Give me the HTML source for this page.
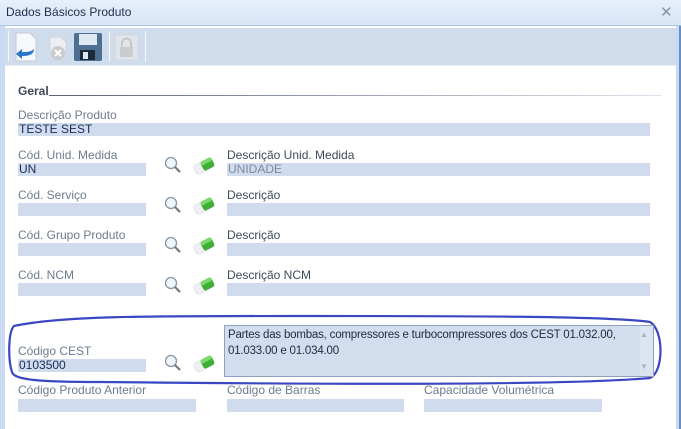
<!DOCTYPE html>
<html><head><meta charset="utf-8"><style>
*{margin:0;padding:0;box-sizing:border-box}
body{width:681px;height:429px;overflow:hidden;background:#fff;font-family:"Liberation Sans",sans-serif;font-size:12px;position:relative}
.a{position:absolute}
.lbl{position:absolute;color:#6e7b8f;font-size:12px;line-height:14px}
.dl{position:absolute;color:#3f4a5a;font-size:12px;line-height:14px}
.f{position:absolute;background:#d0dcee;height:13px;color:#1a2b55;font-size:12px;line-height:13px;padding-left:1px}
.fd{color:#7d8aa0}
</style></head><body>
<div class="a" style="left:0;top:0;width:681px;height:26px;background:linear-gradient(#e6eefa,#d8e6f7);border-bottom:1px solid #a9c1e2"></div>
<div class="a" style="left:6px;top:5px;color:#1e2f4e;font-size:12px">Dados Básicos Produto</div>
<div class="a" style="left:660px;top:3px;color:#8a96a8;font-size:15px">✕</div>
<div class="a" style="left:0;top:26px;width:5px;height:403px;background:#c9daf2"></div>
<div class="a" style="left:676px;top:26px;width:5px;height:403px;background:#c9daf2;border-right:2px solid #6a8dc4"></div>
<div class="a" style="left:5px;top:28px;width:671px;height:38px;background:#cfdcec;border-bottom:1px solid #e8eef6"></div>
<div class="a" style="left:8px;top:31px;width:1px;height:31px;background:#f4f7fb"></div>
<div class="a" style="left:109px;top:31px;width:1px;height:31px;background:#f4f7fb"></div>
<div class="a" style="left:145px;top:31px;width:1px;height:31px;background:#f4f7fb"></div>
<svg class="a" style="left:14px;top:32px" width="24" height="30"><path d="M2 1h14l6 6v22H2z" fill="#f6f8fb" stroke="#c7ccd4"/><path d="M20 17c0 6-6 7-12 7v3l-6-5 6-5v3c5 0 9 0 12-3z" fill="#2a75c9"/></svg>
<svg class="a" style="left:47px;top:36px" width="22" height="26"><path d="M3 1h11l5 5v10H3z" fill="#eceef2" stroke="#d0d4da"/><circle cx="11" cy="17" r="7" fill="#c9cbcf"/><path d="M8 14l6 6M14 14l-6 6" stroke="#fff" stroke-width="2"/></svg>
<svg class="a" style="left:73px;top:32px" width="30" height="30"><rect x="1" y="1" width="28" height="28" rx="2" fill="#4d6f92"/><rect x="6" y="2" width="18" height="11" fill="#dfe8f2"/><rect x="7" y="18" width="15" height="10" fill="#1c2a3b"/><rect x="10" y="20" width="5" height="7" fill="#dfe8f2"/></svg>
<svg class="a" style="left:114px;top:34px" width="26" height="28"><rect x="1" y="1" width="23" height="25" fill="#e1e4e9" stroke="#d3d7dd"/><rect x="6" y="13" width="13" height="10" fill="#c9ccd1"/><path d="M8 13v-4a4.5 4.5 0 0 1 9 0v4" fill="none" stroke="#c4c7cc" stroke-width="2"/></svg>
<div class="a" style="left:18px;top:84px;font-weight:bold;color:#404a57;font-size:12px">Geral</div>
<div class="a" style="left:49px;top:95px;width:612px;height:1px;background:linear-gradient(90deg,#5a6476,#dde3ec)"></div>
<div class="lbl" style="left:18px;top:108px">Descrição Produto</div>
<div class="f" style="left:18px;top:123px;width:632px">TESTE SEST</div>

<div class="lbl" style="left:18px;top:148px">Cód. Unid. Medida</div>
<div class="f" style="left:18px;top:163px;width:128px">UN</div>
<div class="dl" style="left:227px;top:148px">Descrição Unid. Medida</div>
<div class="f fd" style="left:227px;top:163px;width:423px">UNIDADE</div>

<div class="lbl" style="left:18px;top:188px">Cód. Serviço</div>
<div class="f" style="left:18px;top:203px;width:128px"></div>
<div class="dl" style="left:227px;top:188px">Descrição</div>
<div class="f" style="left:227px;top:203px;width:423px"></div>

<div class="lbl" style="left:18px;top:228px">Cód. Grupo Produto</div>
<div class="f" style="left:18px;top:243px;width:128px"></div>
<div class="dl" style="left:227px;top:228px">Descrição</div>
<div class="f" style="left:227px;top:243px;width:423px"></div>

<div class="lbl" style="left:18px;top:268px">Cód. NCM</div>
<div class="f" style="left:18px;top:283px;width:128px"></div>
<div class="dl" style="left:227px;top:268px">Descrição NCM</div>
<div class="f" style="left:227px;top:283px;width:423px"></div>

<svg class="a" style="left:0;top:310px" width="681" height="80"><path d="M14 16C60 6 140 6 300 6S610 6 650 12C664 20 664 62 650 68C560 76 300 74 100 72C40 72 14 70 12 62C8 50 8 22 14 16z" fill="none" stroke="#3a47c2" stroke-width="2.2"/></svg>
<div class="lbl" style="left:18px;top:344px">Código CEST</div>
<div class="f" style="left:18px;top:359px;width:128px">0103500</div>
<div class="a" style="left:224px;top:325px;width:430px;height:52px;background:#d2ddee;border:1px solid #8f9fbd"></div>
<div class="a" style="left:640px;top:326px;width:13px;height:50px;background:#dbe4f1"></div>
<div class="a" style="left:640px;top:330px;color:#a9b3c1;font-size:8px">▲</div>
<div class="a" style="left:640px;top:362px;color:#a9b3c1;font-size:8px">▼</div>
<div class="a" style="left:228px;top:327px;width:412px;color:#1e2a44;font-size:11.5px;letter-spacing:-0.2px;line-height:16px">Partes das bombas, compressores e turbocompressores dos CEST 01.032.00, 01.033.00 e 01.034.00</div>

<div class="lbl" style="left:18px;top:383px">Código Produto Anterior</div>
<div class="f" style="left:18px;top:399px;width:178px"></div>
<div class="lbl" style="left:227px;top:383px">Código de Barras</div>
<div class="f" style="left:227px;top:399px;width:177px"></div>
<div class="lbl" style="left:424px;top:383px">Capacidade Volumétrica</div>
<div class="f" style="left:424px;top:399px;width:178px"></div>

<svg width="0" height="0" style="position:absolute"><defs>
<g id="mg"><circle cx="7" cy="7" r="5.5" fill="#eef5fb" stroke="#8c97a4" stroke-width="1.3"/><path d="M11 11l5 5" stroke="#6d747c" stroke-width="2"/></g>
<g id="er"><g transform="rotate(-28 12 10)"><rect x="2" y="5" width="20" height="10" rx="2.5" fill="#eef0f2" stroke="#d6dade" stroke-width="0.6"/><rect x="10" y="5" width="12" height="10" rx="2.5" fill="#3fae33"/><rect x="10" y="5" width="12" height="4" rx="2" fill="#7ad96a"/></g></g>
</defs></svg>
<svg class="a" style="left:164px;top:156px" width="20" height="20"><use href="#mg"/></svg>
<svg class="a" style="left:192px;top:156px" width="24" height="22"><use href="#er"/></svg>
<svg class="a" style="left:164px;top:196px" width="20" height="20"><use href="#mg"/></svg>
<svg class="a" style="left:192px;top:196px" width="24" height="22"><use href="#er"/></svg>
<svg class="a" style="left:164px;top:236px" width="20" height="20"><use href="#mg"/></svg>
<svg class="a" style="left:192px;top:236px" width="24" height="22"><use href="#er"/></svg>
<svg class="a" style="left:164px;top:276px" width="20" height="20"><use href="#mg"/></svg>
<svg class="a" style="left:192px;top:276px" width="24" height="22"><use href="#er"/></svg>
<svg class="a" style="left:164px;top:354px" width="20" height="20"><use href="#mg"/></svg>
<svg class="a" style="left:192px;top:354px" width="24" height="22"><use href="#er"/></svg>
</body></html>
